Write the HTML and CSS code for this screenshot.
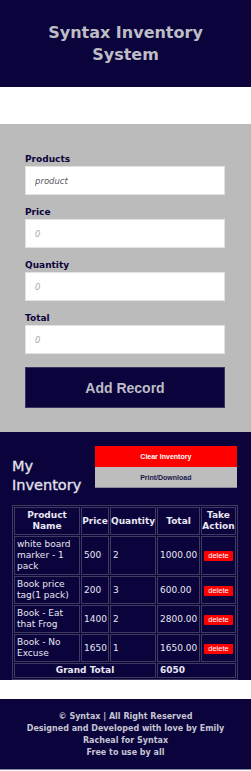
FILE: index.html
```html
<!DOCTYPE html>
<html>
<head>
<meta charset="utf-8">
<link rel="stylesheet" href="styles.css">
</head>
<body>
<header class="top">
  <h1 class="title">Syntax Inventory System</h1>
</header>
<div class="spacer"></div>
<section class="form-area">
  <form class="form">
    <label class="lbl">Products</label>
    <input class="inp inp-text" type="text" placeholder="product">
    <label class="lbl">Price</label>
    <input class="inp" type="text" placeholder="0">
    <label class="lbl">Quantity</label>
    <input class="inp" type="text" placeholder="0">
    <label class="lbl">Total</label>
    <input class="inp" type="text" placeholder="0">
    <button class="add" type="button">Add Record</button>
  </form>
</section>
<section class="inventory">
  <div class="inv-head">
    <h2 class="inv-title">My Inventory</h2>
    <div class="actions">
      <button class="btn-clear" type="button">Clear Inventory</button>
      <button class="btn-print" type="button">Print/Download</button>
    </div>
  </div>
  <table class="tbl">
    <colgroup>
      <col class="c1"><col class="c2"><col class="c3"><col class="c4"><col class="c5">
    </colgroup>
    <thead>
      <tr><th>Product Name</th><th>Price</th><th>Quantity</th><th>Total</th><th>Take Action</th></tr>
    </thead>
    <tbody>
      <tr class="r1"><td>white board marker - 1 pack</td><td>500</td><td>2</td><td>1000.00</td><td class="act"><button class="del" type="button">delete</button></td></tr>
      <tr><td>Book price tag(1 pack)</td><td>200</td><td>3</td><td>600.00</td><td class="act"><button class="del" type="button">delete</button></td></tr>
      <tr><td>Book - Eat that Frog</td><td>1400</td><td>2</td><td>2800.00</td><td class="act"><button class="del" type="button">delete</button></td></tr>
      <tr><td>Book - No Excuse</td><td>1650</td><td>1</td><td>1650.00</td><td class="act"><button class="del" type="button">delete</button></td></tr>
      <tr class="gt"><td colspan="3" class="gt-label">Grand Total</td><td colspan="2" class="gt-val">6050</td></tr>
    </tbody>
  </table>
</section>
<div class="spacer2"></div>
<footer class="foot">
  <p>© Syntax | All Right Reserved</p>
  <p>Designed and Developed with love by Emily Racheal for Syntax</p>
  <p>Free to use by all</p>
</footer>
</body>
</html>
```

FILE: styles.css
```css
html, body {
  margin: 0;
  padding: 0;
  background: #ffffff;
  font-family: "DejaVu Sans", "Open Sans", sans-serif;
}
.top {
  background: #0b033c;
  height: 87px;
  box-sizing: border-box;
  padding: 22px 36px 0;
}
.title {
  margin: 0;
  text-align: center;
  color: #bdbdc6;
  font-size: 16px;
  line-height: 22px;
  font-weight: 700;
}
.spacer {
  height: 37px;
}
.form-area {
  background: #bbbbbb;
  height: 308px;
  box-sizing: border-box;
  padding: 29px 26px 0 25px;
}
.form {
  display: flex;
  flex-direction: column;
}
.lbl {
  font-size: 9px;
  line-height: 12px;
  font-weight: 700;
  color: #0b033c;
  margin-bottom: 1px;
}
.inp {
  height: 29px;
  box-sizing: border-box;
  border: 1px solid #e2e2e2;
  background: #ffffff;
  margin: 0 0 11px 0;
  padding: 0 9px;
  font-family: "DejaVu Sans", sans-serif;
  font-size: 8.5px;
  font-style: italic;
  outline: none;
}
.inp::placeholder {
  color: #a8a8a8;
}
.inp-text::placeholder {
  color: #55555f;
}
.add {
  margin-top: 2px;
  height: 41px;
  background: #0b033c;
  border: 1px solid #3a3460;
  color: #bdbdc6;
  font-family: "Liberation Sans", Arial, sans-serif;
  font-weight: 700;
  font-size: 14px;
}
.inventory {
  background: #0b033c;
  height: 248px;
  box-sizing: border-box;
  padding: 14px 14px 0 12px;
}
.inv-head {
  display: flex;
  align-items: center;
  height: 42px;
}
.inv-title {
  margin: 0;
  width: 83px;
  color: #e4e4ee;
  font-size: 14.5px;
  line-height: 19px;
  font-weight: 500;
  padding-top: 18px;
  -webkit-text-stroke: 0.3px #e4e4ee;
}
.actions {
  display: flex;
  flex-direction: column;
  width: 143px;
}
.btn-clear, .btn-print {
  height: 21px;
  border: none;
  font-family: "Liberation Sans", Arial, sans-serif;
  font-weight: 700;
  font-size: 7px;
  padding: 0;
}
.btn-clear {
  background: #ff0000;
  color: #ffffff;
}
.btn-print {
  background: #bdbdbd;
  color: #1b1848;
  border-bottom: 1px solid #8a8a9a;
}
.tbl {
  margin-top: 17px;
  width: 225px;
  table-layout: fixed;
  border-collapse: separate;
  border-spacing: 1px;
  border: 1px solid #3e3b5e;
  color: #e8e8f2;
  font-size: 9px;
  line-height: 11px;
}
.c1 { width: 66px; }
.c2 { width: 28px; }
.c3 { width: 46px; }
.c4 { width: 43px; }
.c5 { width: 35px; }
.tbl th, .tbl td {
  border: 1px solid #3e3b5e;
  box-sizing: border-box;
}
.tbl th {
  font-weight: 700;
  text-align: center;
  line-height: 11px;
  padding: 2px 0;
}
.tbl td {
  text-align: left;
  padding: 2px 1px 2px 2px;
}
.tbl .act {
  text-align: center;
  padding: 0;
}
.del {
  background: #ff0000;
  color: #ffffff;
  border: none;
  border-radius: 1px;
  font-family: "Liberation Sans", Arial, sans-serif;
  font-size: 7.5px;
  padding: 1px 4px;
  line-height: 8px;
}
.gt td {
  font-weight: 700;
  padding: 1px 2px;
}
.gt .gt-label {
  text-align: center;
}
.spacer2 {
  height: 19px;
}
.foot {
  background: #0b033c;
  height: 71px;
  box-sizing: border-box;
  padding: 12px 18px 0;
  text-align: center;
  color: #c6c6d2;
  font-size: 8px;
  line-height: 12px;
  font-weight: 700;
  border-bottom: 1px solid #8a8aa0;
}
.foot p {
  margin: 0;
}
```
